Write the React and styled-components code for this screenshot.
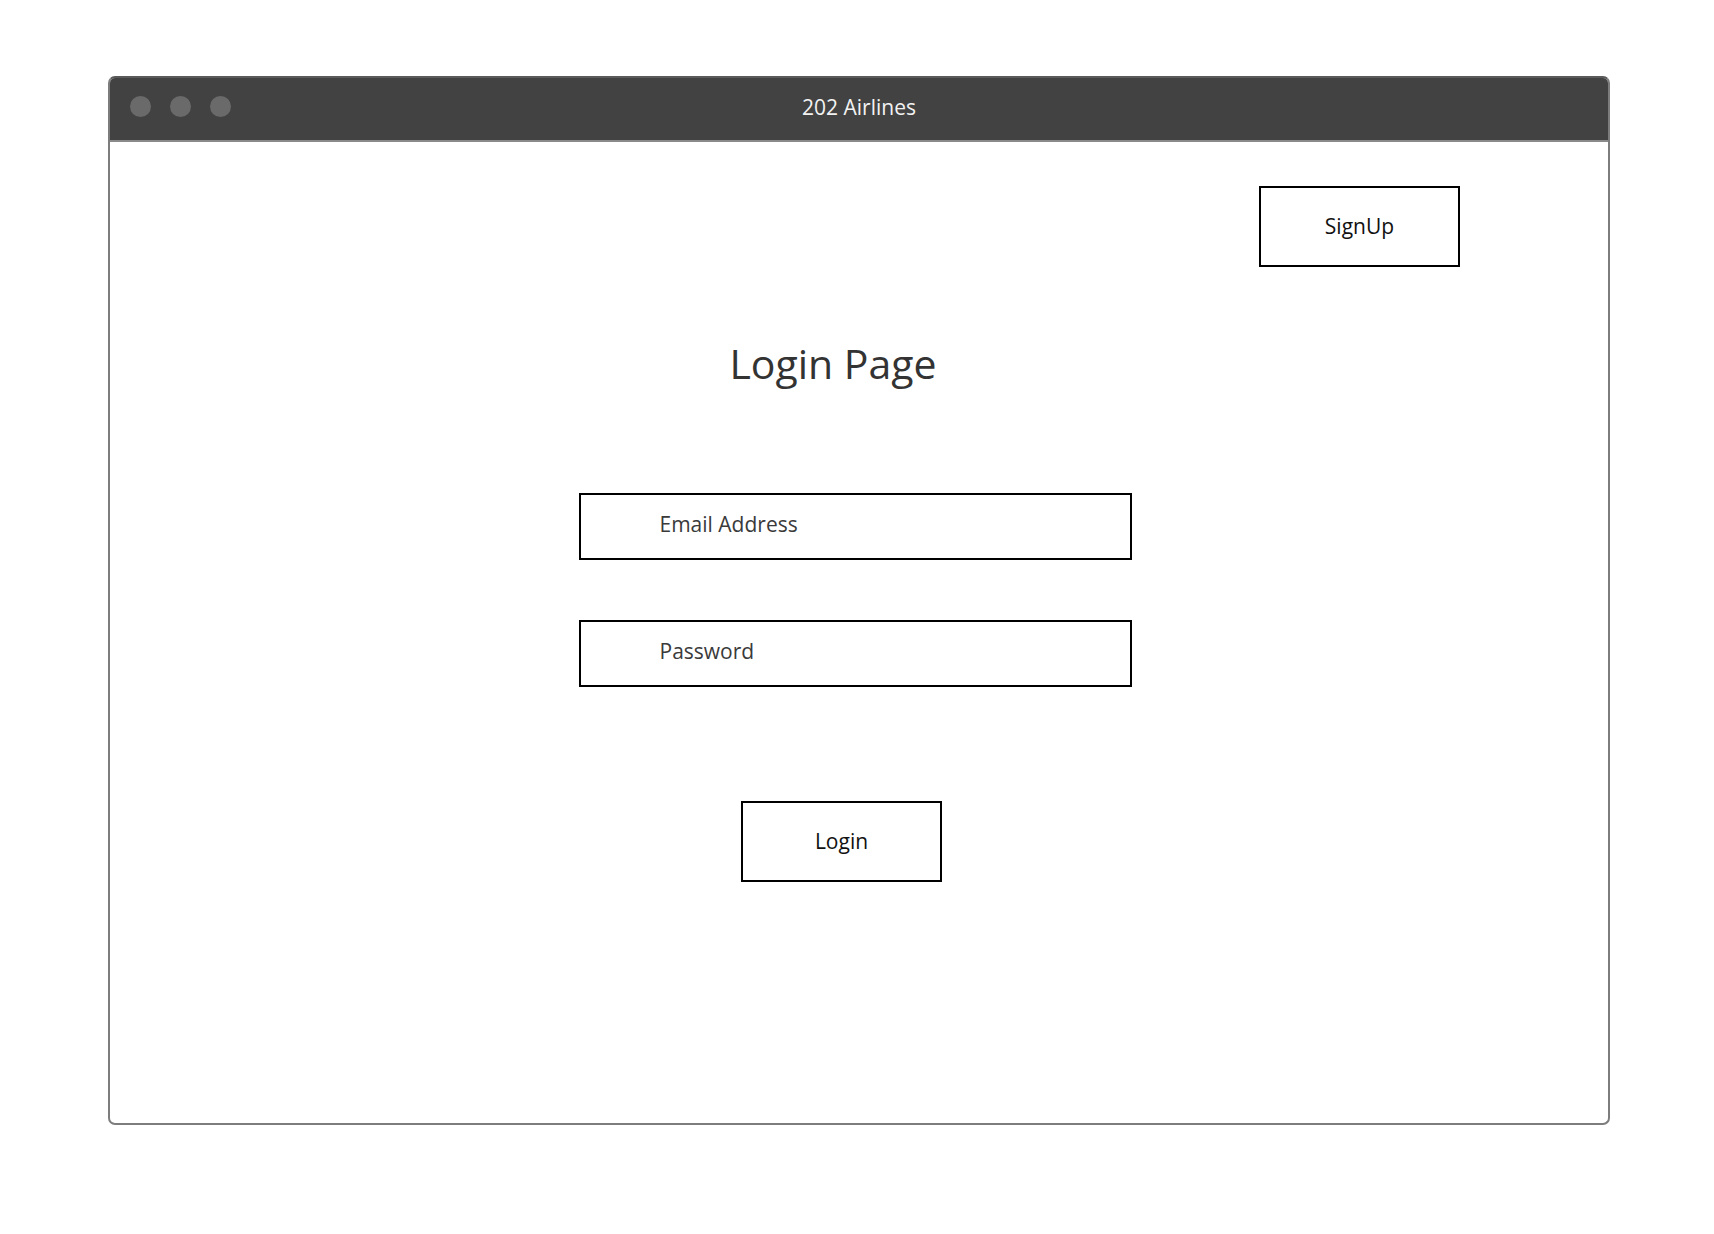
import styled, { createGlobalStyle } from "styled-components";

const GlobalStyle = createGlobalStyle`
  html, body {
    margin: 0;
    padding: 0;
    background: #ffffff;
  }
  body {
    font-family: "Open Sans", "Noto Sans", Arial, sans-serif;
  }
  * {
    box-sizing: border-box;
  }
`;

const Page = styled.div`
  padding: 76px 0 0 108px;
  width: 1714px;
  height: 1234px;
`;

const Window = styled.div`
  width: 1502px;
  height: 1049px;
  border: 2px solid #7d7d7d;
  border-top-color: #5a5a5a;
  border-radius: 7px;
  overflow: hidden;
  display: flex;
  flex-direction: column;
  background: #ffffff;
`;

const TitleBar = styled.div`
  height: 64px;
  flex-shrink: 0;
  background: #424242;
  border-bottom: 2px solid #8a8a8a;
  display: grid;
  grid-template-columns: 1fr auto 1fr;
  align-items: start;
  padding: 0 20px;
`;

const Dots = styled.div`
  display: flex;
  gap: 19px;
  margin-top: 18px;
`;

const Dot = styled.span`
  width: 21px;
  height: 21px;
  border-radius: 50%;
  background: #6a6a6a;
`;

const WindowTitle = styled.div`
  margin-top: 19px;
  font-size: 21px;
  line-height: 21px;
  color: #f2f2f2;
`;

const Content = styled.div`
  flex: 1;
  display: flex;
  flex-direction: column;
  align-items: center;
`;

const TopRow = styled.div`
  align-self: stretch;
  display: flex;
  justify-content: flex-end;
  padding: 44px 148px 0 0;
`;

const BoxButton = styled.button`
  width: 201px;
  height: 81px;
  border: 2px solid #000000;
  background: #ffffff;
  font-family: "Open Sans", "Noto Sans", Arial, sans-serif;
  font-size: 21px;
  line-height: 21px;
  color: #111111;
  display: flex;
  align-items: center;
  justify-content: center;
  cursor: pointer;
  padding: 0;
  margin-right: ${(p) => p.$shift || 0}px;
`;

const Heading = styled.h1`
  margin: 76px 52px 0 0;
  font-weight: 400;
  font-size: 41px;
  line-height: 41px;
  color: #333333;
`;

const Form = styled.form`
  margin: 109px 8px 0 0;
  display: flex;
  flex-direction: column;
  align-items: center;
  gap: 60px;
`;

const Field = styled.input`
  width: 553px;
  height: 67px;
  border: 2px solid #000000;
  border-radius: 0;
  outline: none;
  padding: 0 0 5px 79px;
  font-family: "Open Sans", "Noto Sans", Arial, sans-serif;
  font-size: 21px;
  line-height: 21px;
  color: #333333;
  background: #ffffff;
  &::placeholder {
    color: #3a3a3a;
    opacity: 1;
  }
`;

const Actions = styled.div`
  margin-top: 114px;
  display: flex;
  justify-content: center;
`;

export default function App() {
  return (
    <>
      <GlobalStyle />
      <Page>
        <Window>
          <TitleBar>
            <Dots>
              <Dot />
              <Dot />
              <Dot />
            </Dots>
            <WindowTitle>202 Airlines</WindowTitle>
            <div />
          </TitleBar>
          <Content>
            <TopRow>
              <BoxButton type="button">SignUp</BoxButton>
            </TopRow>
            <Heading>Login Page</Heading>
            <Form onSubmit={(e) => e.preventDefault()}>
              <Field type="email" placeholder="Email Address" />
              <Field type="password" placeholder="Password" />
            </Form>
            <Actions>
              <BoxButton type="submit" $shift={35}>
                Login
              </BoxButton>
            </Actions>
          </Content>
        </Window>
      </Page>
    </>
  );
}
